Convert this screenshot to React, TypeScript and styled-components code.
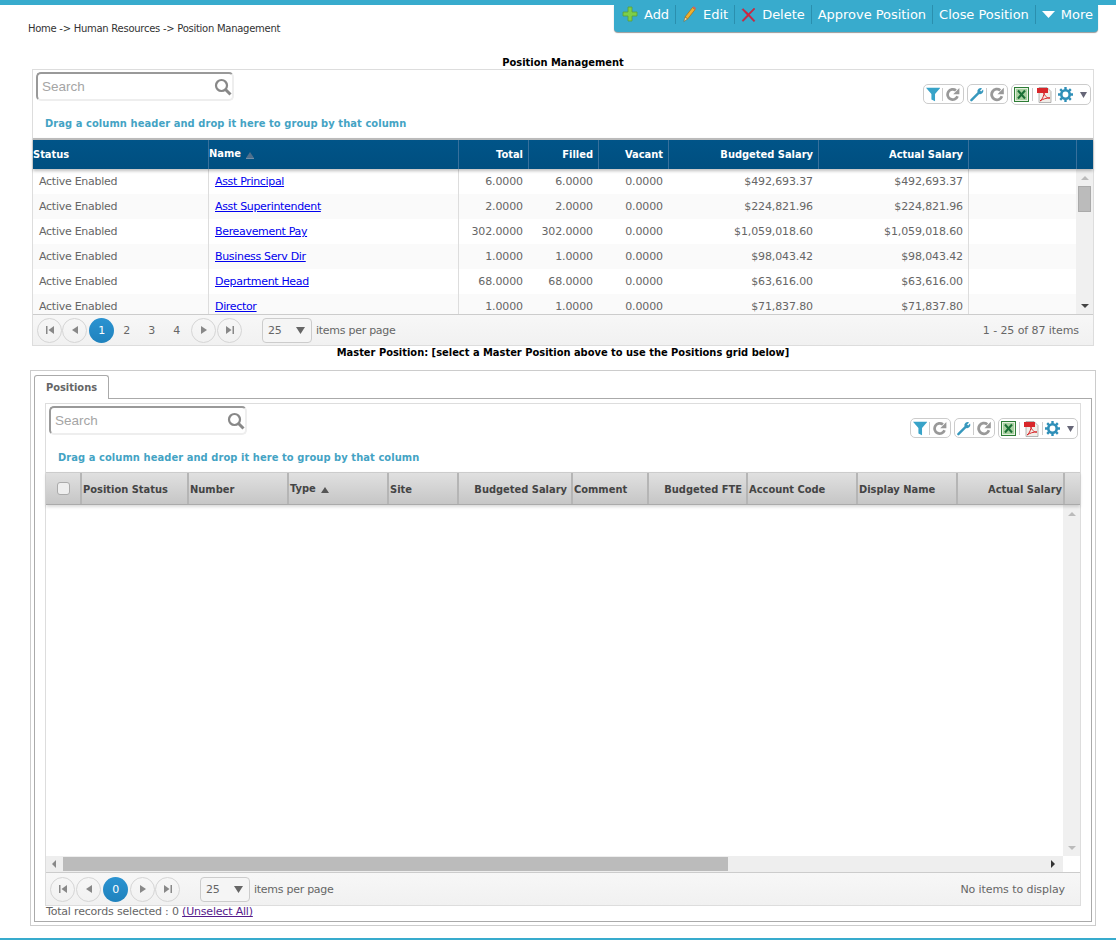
import React from "react";
import styled, { createGlobalStyle } from "styled-components";

const Global = createGlobalStyle`
  html, body { margin: 0; padding: 0; background: #fff; }
  body { font-family: "DejaVu Sans", Verdana, sans-serif; font-size: 11px; color: #555; overflow: hidden; letter-spacing: -0.27px; }
  * { box-sizing: border-box; }
`;
const boldText = `font-family: "DejaVu Sans Condensed", "DejaVu Sans", sans-serif; font-stretch: condensed; font-weight: bold; letter-spacing: 0;`;
const Page = styled.div`
  width: 1116px; height: 940px; border-top: 5px solid #38abcd; border-bottom: 2px solid #38abcd;
  display: flex; flex-direction: column; overflow: hidden;
`;
const TopRow = styled.div`display: flex; justify-content: space-between; padding: 0 18px 0 28px; height: 52px;`;
const Crumb = styled.div`font-size: 10px; color: #333; margin-top: 17px; line-height: 13px;`;
const Toolbar = styled.div`
  width: 484px; height: 27px; background: #38abcd; border-radius: 0 0 4px 4px; box-shadow: 0 1px 1px #999;
  display: flex; align-items: center; padding: 0 6px 9px 8px; color: #fff; font-size: 13px; letter-spacing: -0.03px;
`;
const ToolItem = styled.div`
  display: flex; align-items: center; gap: 6px; white-space: nowrap; height: 19px; padding: 0 6px 0 ${p => p.$first ? 0 : 6}px;
  border-right: ${p => p.$last ? 0 : "1px solid #2a8fae"};
`;
const Title = styled.div`${boldText} font-size: 11px; color: #000; text-align: center; padding-left: 10px; line-height: 12px;`;
const Grid = styled.div`
  border: 1px solid #ddd; display: flex; flex-direction: column; background: #fff;
  margin: ${p => p.$outer ? "0 0 0 32px" : "0"}; width: ${p => p.$w}px; height: ${p => p.$h}px;
`;
const GridTop = styled.div`display: flex; justify-content: space-between; align-items: flex-start; padding: 2px 2px 0 3px; height: ${p => p.$h}px;`;
const SearchBox = styled.div`
  width: 198px; height: 29px; border: 2px solid #eee; border-top-color: #999; border-left-color: #999; border-radius: 5px;
  display: flex; align-items: center; justify-content: space-between; padding: 0 0 0 4px; background: #fff;
`;
const SearchInput = styled.input`
  border: 0; outline: 0; padding: 0 0 1px; width: 160px; font: 13.5px "Liberation Sans", Arial, sans-serif; letter-spacing: 0; color: #999;
  &::placeholder { color: #a5a5a5; opacity: 1; }
`;
const Tools = styled.div`display: flex; gap: 3px; margin-top: 12px;`;
const ToolGroup = styled.div`
  display: flex; align-items: center; height: ${p => p.$wide ? 21 : 20}px; border: 1px solid #ccc; border-radius: 5px;
  padding: 0 3px 0 2px; width: ${p => p.$w}px;
`;
const ToolSep = styled.span`
  width: 1px; height: 13px; background: #ccc; flex: none; margin: 0 ${p => p.$r}px 0 ${p => p.$l}px;
`;
const DropCaret = styled.span`margin-left: auto; display: flex;`;
const GroupHint = styled.div`
  ${boldText} letter-spacing: 0.085px; color: #44a3c4; font-size: 11px; line-height: 14px; padding-left: ${p => p.$pad}px; height: ${p => p.$h}px;
`;
const DarkHead = styled.div`
  display: flex; height: 31px; background: linear-gradient(#005488, #004f80); border-top: 2px solid #bbb; box-shadow: 0 2px 3px rgba(0,0,0,.25);
  position: relative; flex: none; width: 1060px;
`;
const DarkCell = styled.div`
  ${boldText} width: ${p => p.$w}px; flex: none; border-right: 1px solid #38709c; color: #fff; font-size: 11px;
  line-height: ${p => p.$up ? 27 : 29}px; text-align: ${p => p.$r ? "right" : "left"}; padding-right: ${p => p.$r ? 5 : 0}px;
  white-space: nowrap;
  &:last-child { border-right: 0; }
`;
const SortUp = styled.span`
  display: inline-block; width: 0; height: 0; border: 4px solid transparent; border-top: 0; border-bottom: 6px solid ${p => p.$c};
  margin-left: 5px; vertical-align: -1px; box-shadow: ${p => p.$line ? "0 1px 0 #6f8ea6" : "none"};
`;
const BodyArea = styled.div`display: flex; height: ${p => p.$h}px; flex: none;`;
const Rows = styled.div`flex: 1; overflow: hidden;`;
const Row = styled.div`display: flex; height: 25px; background: ${p => p.$alt ? "#fafafa" : "#fff"};`;
const Cell = styled.div`
  width: ${p => p.$w}px; flex: none; border-right: 1px solid ${p => p.$line ? "#ddd" : "transparent"}; line-height: 25px; font-size: 11px; color: #666;
  text-align: ${p => p.$r ? "right" : "left"}; padding: ${p => p.$r ? "0 5px 0 0" : "0 0 0 6px"}; white-space: nowrap;
  letter-spacing: ${p => p.$r ? "-0.12px" : "-0.27px"};
`;
const NameLink = styled.a`color: #00e; text-decoration: underline; letter-spacing: -0.33px;`;
const VScroll = styled.div`
  width: 17px; flex: none; background: #f0f0f0; display: flex; flex-direction: column; align-items: center; padding: 7px 0 6px;
`;
const Arrow = styled.span`
  width: 0; height: 0; border-left: 4px solid transparent; border-right: 4px solid transparent;
  ${p => p.$down ? `border-top: 4px solid ${p.$c};` : `border-bottom: 4px solid ${p.$c};`}
`;
const VThumb = styled.div`width: 13px; height: 26px; background: #bbb; border: 1px solid #aaa; margin-top: 6px;`;
const VSpacer = styled.div`flex: 1;`;
const Pager = styled.div`
  height: ${p => p.$h}px; flex: none; border-top: 1px solid #ccc; background: linear-gradient(#f7f7f7, #f1f1f1); display: flex; align-items: center;
  padding: 0 ${p => p.$rp}px 0 ${p => p.$lp}px; font-size: 11px; color: #666;
`;
const PageBtn = styled.div`
  width: 25px; height: 25px; border-radius: 50%; border: 1px solid #d5d5d5; flex: none; display: flex; align-items: center; justify-content: center;
  margin-right: ${p => p.$gap ?? 0}px; margin-left: ${p => p.$lead ?? 0}px;
`;
const PageCurrent = styled.div`
  width: 25px; height: 25px; border-radius: 50%; flex: none; background: linear-gradient(#2b93d1, #1f82bd); color: #fff;
  display: flex; align-items: center; justify-content: center; margin: 0 ${p => p.$mr}px 0 2px;
`;
const PageNum = styled.div`width: 25px; text-align: center; flex: none;`;
const PerPage = styled.div`
  width: 50px; height: 25px; border: 1px solid #ccc; border-radius: 4px; display: flex; align-items: center; justify-content: space-between;
  padding: 0 6px 0 5px; margin: 0 4px 0 ${p => p.$ml}px; background: #f5f5f5;
`;
const PagerInfo = styled.div`margin-left: auto; white-space: nowrap; letter-spacing: -0.08px;`;
const SectionTitle = styled.div`${boldText} font-size: 11px; color: #000; text-align: center; padding-left: 10px; line-height: 12px; margin-top: 1px; height: 23px;`;
const Outer = styled.div`
  margin-left: 30px; width: 1066px; height: 556px; border: 1px solid #ccc; padding: 4px 3px 3px 3px; display: flex; flex-direction: column;
`;
const TabStrip = styled.div`height: 24px; flex: none; border-bottom: 1px solid #aaa; display: flex;`;
const Tab = styled.div`
  ${boldText} width: 75px; height: 24px; background: #fff; border: 1px solid #aaa; border-bottom: 0; border-radius: 3px 3px 0 0; color: #666;
  text-align: center; line-height: 24px; font-size: 11px;
`;
const TabBody = styled.div`flex: 1; border: 1px solid #aaa; border-top: 0; padding: 4px 10px 0 10px; display: flex; flex-direction: column;`;
const GreyHead = styled.div`
  display: flex; height: 33px; flex: none; background: linear-gradient(#e0e0e0, #c6c6c6); border-top: 1px solid #ccc; border-bottom: 1px solid #aaa;
  box-shadow: 0 2px 3px rgba(0,0,0,.15); position: relative;
`;
const GreyCell = styled.div`
  ${boldText} width: ${p => p.$w}px; flex: none; border-right: 2px solid #b5b5b5; color: #444; font-size: 11px; line-height: ${p => p.$up ? 31 : 33}px;
  padding: ${p => p.$r ? `0 ${p.$r}px 0 0` : "0 0 0 1px"}; text-align: ${p => p.$r ? "right" : "left"}; white-space: nowrap;
  display: ${p => p.$center ? "flex" : "block"}; align-items: center; justify-content: center;
  &:last-child { border-right: 0; }
`;
const Check = styled.span`width: 13px; height: 13px; border: 1px solid #aaa; border-radius: 3px; background: #eee; display: block;`;
const HScrollRow = styled.div`display: flex; height: 16px; flex: none;`;
const HScroll = styled.div`flex: 1; background: #eee; display: flex; align-items: center; padding: 0 8px 0 6px;`;
const HThumb = styled.div`width: 665px; height: 14px; background: #bbb; margin: 0 auto 0 7px;`;
const HArrow = styled.span`
  width: 0; height: 0; border-top: 4px solid transparent; border-bottom: 4px solid transparent;
  ${p => p.$right ? "border-left: 4px solid #333;" : "border-right: 4px solid #888;"}
`;
const Corner = styled.div`width: 17px; background: #fff;`;
const TotalLine = styled.div`font-size: 11px; letter-spacing: -0.19px; color: #666; line-height: 13px; padding-left: 1px; margin-top: -1px;`;
const VisitedLink = styled.a`color: #551a8b; text-decoration: underline;`;

const PlusIcon = () => <svg width="16" height="16" viewBox="0 0 16 16"><path d="M6 1h4v5h5v4h-5v5H6v-5H1V6h5z" fill="#7ccf4a" stroke="#5a9e3a" strokeWidth=".8" /></svg>;
const PencilIcon = () => <svg width="15" height="17" viewBox="0 0 15 17"><path d="M3 11l7.5-9.5 2.6 2L5.6 13z" fill="#f0b030" stroke="#a86d10" strokeWidth=".7" /><path d="M3 11l2.6 2L1.8 15.5z" fill="#f3d7a0" stroke="#7a5a20" strokeWidth=".5" /><path d="M10.5 1.5l2.6 2 1-1.3-2.6-2z" fill="#d9605a" /></svg>;
const CrossIcon = () => <svg width="15" height="15" viewBox="0 0 15 15"><path d="M2 1.5l5.5 5 5.5-5.5 1 1-5.5 5.7 5.5 6-1.2 1L7.5 9l-5.3 5.5-1.2-1 5.2-5.5L1 2.5z" fill="#d8203c" stroke="#a8324a" strokeWidth=".4" /></svg>;
const MoreArrow = () => <svg width="13" height="8" viewBox="0 0 13 8"><path d="M0 1h13L6.5 8z" fill="#fff" /></svg>;
const Funnel = () => <svg width="16" height="15" viewBox="0 0 16 15"><path d="M0 0h16L10 7V15L6 13V7z" fill="#38a3c8" /></svg>;
const Refresh = () => <svg width="15" height="15" viewBox="0 0 15 15"><path d="M12.8 9.5A5.7 5.7 0 1 1 11 3" fill="none" stroke="#999" strokeWidth="3" /><path d="M14.8 .3v7H8z" fill="#999" /></svg>;
const Wrench = () => <svg width="15" height="15" viewBox="0 0 15 15"><path d="M1.5 13.5L9 6" stroke="#3798bd" strokeWidth="2.6" fill="none" strokeLinecap="round" /><path d="M8 5a3.5 3.5 0 0 1 5-4l-2.2 2.2 1.2 1.2L14 2.2A3.5 3.5 0 0 1 9.8 7z" fill="#3798bd" /></svg>;
const Excel = () => <svg width="15" height="15" viewBox="0 0 15 15"><rect x=".5" y=".5" width="14" height="14" fill="#e6f0e0" stroke="#2e7d36" /><rect x="2" y="2" width="11" height="11" fill="#a8d0a0" /><path d="M4 3.5l7 8M11 3.5l-7 8" stroke="#1a7034" strokeWidth="2" /></svg>;
const Pdf = () => <svg width="15" height="16" viewBox="0 0 15 16"><path d="M2 .5h8l4 4v11H2z" fill="#f1eee9" stroke="#999" strokeWidth=".7" /><rect x="0" y="1" width="11" height="5" fill="#d8262a" /><path d="M3 14c3-2 4-6 4-9 0 3 2 6 6 6-4 0-7 1-10 3z" fill="none" stroke="#d8262a" strokeWidth="1" /></svg>;
const Gear = () => <svg width="15" height="15" viewBox="0 0 15 15"><circle cx="7.5" cy="7.5" r="4.2" fill="none" stroke="#2f8fb8" strokeWidth="2.6" /><path d="M7.5 0v3M7.5 12v3M0 7.5h3M12 7.5h3M2.2 2.2l2.1 2.1M10.7 10.7l2.1 2.1M12.8 2.2l-2.1 2.1M4.3 10.7l-2.1 2.1" stroke="#2f8fb8" strokeWidth="2.4" /></svg>;
const SmallDown = () => <svg width="9" height="7" viewBox="0 0 9 7"><path d="M0 0h9L4.5 7z" fill="#666" /></svg>;
const TinyDown = () => <svg width="7" height="6" viewBox="0 0 7 6"><path d="M0 0h7L3.5 6z" fill="#667" /></svg>;
const SearchGlass = () => <svg width="18" height="18" viewBox="0 0 18 18"><circle cx="7.5" cy="7.5" r="5.5" fill="none" stroke="#888" strokeWidth="2.2" /><path d="M11.5 11.5L16.5 16.5" stroke="#888" strokeWidth="3" /></svg>;
const PagerGlyph = ({ d }: { d: string }) => <svg width="10" height="10" viewBox="0 0 10 10"><path d={d} fill="#888" /></svg>;
const FIRST = "M1 1h1.5v8H1zM9 1v8L3.5 5z";
const PREV = "M8 1v8L2 5z";
const NEXT = "M2 1v8l6-4z";
const LAST = "M9 1H7.5v8H9zM1 1v8l5.5-4z";

const SearchField = () => (
  <SearchBox>
    <SearchInput placeholder="Search" readOnly />
    <SearchGlass />
  </SearchBox>
);
const ToolIcons = () => (
  <Tools>
    <ToolGroup $w={41}><Funnel /><ToolSep $l={2} $r={3} /><Refresh /></ToolGroup>
    <ToolGroup $w={41}><Wrench /><ToolSep $l={2} $r={3} /><Refresh /></ToolGroup>
    <ToolGroup $w={80} $wide>
      <Excel /><ToolSep $l={3} $r={4} /><Pdf /><ToolSep $l={3} $r={2} /><Gear /><DropCaret><TinyDown /></DropCaret>
    </ToolGroup>
  </Tools>
);

const rows = [
  ["Asst Principal", "6.0000", "6.0000", "0.0000", "$492,693.37", "$492,693.37"],
  ["Asst Superintendent", "2.0000", "2.0000", "0.0000", "$224,821.96", "$224,821.96"],
  ["Bereavement Pay", "302.0000", "302.0000", "0.0000", "$1,059,018.60", "$1,059,018.60"],
  ["Business Serv Dir", "1.0000", "1.0000", "0.0000", "$98,043.42", "$98,043.42"],
  ["Department Head", "68.0000", "68.0000", "0.0000", "$63,616.00", "$63,616.00"],
  ["Director", "1.0000", "1.0000", "0.0000", "$71,837.80", "$71,837.80"],
];
const greyCols: [string, number, number?][] = [
  ["Position Status", 107], ["Number", 100], ["Type", 100], ["Site", 70], ["Budgeted Salary", 114, 4], ["Comment", 76],
  ["Budgeted FTE", 99, 4], ["Account Code", 110], ["Display Name", 100], ["Actual Salary", 107, 1],
];

export default function App() {
  return (
    <Page>
      <Global />
      <TopRow>
        <Crumb>Home -&gt; Human Resources -&gt; Position Management</Crumb>
        <Toolbar>
          <ToolItem $first><PlusIcon />Add</ToolItem>
          <ToolItem><PencilIcon />Edit</ToolItem>
          <ToolItem><CrossIcon />Delete</ToolItem>
          <ToolItem>Approve Position</ToolItem>
          <ToolItem>Close Position</ToolItem>
          <ToolItem $last><MoreArrow />More</ToolItem>
        </Toolbar>
      </TopRow>
      <Title>Position Management</Title>
      <Grid $outer $w={1062} $h={277}>
        <GridTop $h={47}><SearchField /><ToolIcons /></GridTop>
        <GroupHint $pad={12} $h={21}>Drag a column header and drop it here to group by that column</GroupHint>
        <DarkHead>
          <DarkCell $w={176}>Status</DarkCell>
          <DarkCell $w={250} $up>Name<SortUp $c="#4e6f8c" $line /></DarkCell>
          <DarkCell $w={70} $r>Total</DarkCell>
          <DarkCell $w={70} $r>Filled</DarkCell>
          <DarkCell $w={70} $r>Vacant</DarkCell>
          <DarkCell $w={150} $r>Budgeted Salary</DarkCell>
          <DarkCell $w={150} $r>Actual Salary</DarkCell>
          <DarkCell $w={108} />
          <DarkCell $w={16} />
        </DarkHead>
        <BodyArea $h={145}>
          <Rows>
            {rows.map((r, i) => (
              <Row key={r[0]} $alt={i % 2 === 1}>
                <Cell $w={176} $line>Active Enabled</Cell>
                <Cell $w={250} $line><NameLink href="#">{r[0]}</NameLink></Cell>
                <Cell $w={70} $r>{r[1]}</Cell>
                <Cell $w={70} $r>{r[2]}</Cell>
                <Cell $w={70} $r>{r[3]}</Cell>
                <Cell $w={150} $r>{r[4]}</Cell>
                <Cell $w={150} $r $line>{r[5]}</Cell>
              </Row>
            ))}
          </Rows>
          <VScroll>
            <Arrow $c="#bbb" />
            <VThumb />
            <VSpacer />
            <Arrow $down $c="#444" />
          </VScroll>
        </BodyArea>
        <Pager $h={31} $lp={4} $rp={14}>
          <PageBtn><PagerGlyph d={FIRST} /></PageBtn>
          <PageBtn><PagerGlyph d={PREV} /></PageBtn>
          <PageCurrent $mr={0}>1</PageCurrent>
          <PageNum>2</PageNum><PageNum>3</PageNum><PageNum>4</PageNum>
          <PageBtn $lead={2} $gap={1}><PagerGlyph d={NEXT} /></PageBtn>
          <PageBtn><PagerGlyph d={LAST} /></PageBtn>
          <PerPage $ml={20}>25<SmallDown /></PerPage>
          items per page
          <PagerInfo>1 - 25 of 87 items</PagerInfo>
        </Pager>
      </Grid>
      <SectionTitle>Master Position: [select a Master Position above to use the Positions grid below]</SectionTitle>
      <Outer>
        <TabStrip><Tab>Positions</Tab></TabStrip>
        <TabBody>
          <Grid $w={1036} $h={503}>
            <GridTop $h={48}><SearchField /><ToolIcons /></GridTop>
            <GroupHint $pad={12} $h={22}>Drag a column header and drop it here to group by that column</GroupHint>
            <GreyHead>
              <GreyCell $w={36} $center><Check /></GreyCell>
              {greyCols.map(([label, w, right]) => (
                <GreyCell key={label} $w={w} $r={right} $up={label === "Type"}>
                  {label}{label === "Type" && <SortUp $c="#555" />}
                </GreyCell>
              ))}
              <GreyCell $w={17} />
            </GreyHead>
            <BodyArea $h={351}>
              <Rows />
              <VScroll>
                <Arrow $c="#bbb" />
                <VSpacer />
                <Arrow $down $c="#bbb" />
              </VScroll>
            </BodyArea>
            <HScrollRow>
              <HScroll><HArrow /><HThumb /><HArrow $right /></HScroll>
              <Corner />
            </HScrollRow>
            <Pager $h={33} $lp={4} $rp={15}>
              <PageBtn $gap={1}><PagerGlyph d={FIRST} /></PageBtn>
              <PageBtn><PagerGlyph d={PREV} /></PageBtn>
              <PageCurrent $mr={2}>0</PageCurrent>
              <PageBtn><PagerGlyph d={NEXT} /></PageBtn>
              <PageBtn><PagerGlyph d={LAST} /></PageBtn>
              <PerPage $ml={20}>25<SmallDown /></PerPage>
              items per page
              <PagerInfo>No items to display</PagerInfo>
            </Pager>
          </Grid>
          <TotalLine>Total records selected : 0 <VisitedLink href="#">(Unselect All)</VisitedLink></TotalLine>
        </TabBody>
      </Outer>
    </Page>
  );
}
